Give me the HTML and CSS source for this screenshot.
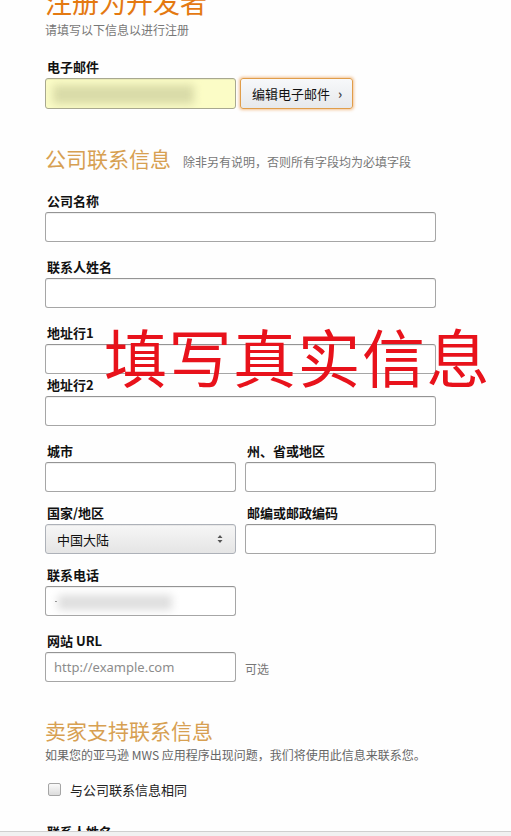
FILE: index.html
```html
<!DOCTYPE html>
<html lang="zh-CN">
<head>
<meta charset="utf-8">
<title>注册为开发者</title>
<link rel="stylesheet" href="styles.css">
</head>
<body>
<div class="page">
  <h1 class="title">注册为开发者</h1>
  <p class="subtitle">请填写以下信息以进行注册</p>

  <div class="field email-field">
    <label class="label">电子邮件</label>
    <div class="email-row">
      <div class="control email-box"><span class="blur blur-email"></span></div>
      <button class="btn-edit">编辑电子邮件 <span class="chev">›</span></button>
    </div>
  </div>

  <div class="section-head sh-company">
    <h2 class="section-title">公司联系信息</h2>
    <span class="section-note">除非另有说明，否则所有字段均为必填字段</span>
  </div>

  <div class="field f-first">
    <label class="label">公司名称</label>
    <div class="control"></div>
  </div>
  <div class="field f-gap">
    <label class="label">联系人姓名</label>
    <div class="control"></div>
  </div>
  <div class="field f-gap">
    <label class="label">地址行1</label>
    <div class="control"></div>
  </div>
  <div class="field f-tight">
    <label class="label">地址行2</label>
    <div class="control"></div>
  </div>

  <div class="row f-gap">
    <div class="col">
      <label class="label">城市</label>
      <div class="control"></div>
    </div>
    <div class="col">
      <label class="label">州、省或地区</label>
      <div class="control"></div>
    </div>
  </div>
  <div class="row f-near">
    <div class="col">
      <label class="label">国家/地区</label>
      <div class="control select">
        <span class="select-text">中国大陆</span>
        <svg class="updown" width="6" height="10" viewBox="0 0 6 10"><path d="M3 1 L5.5 4 L0.5 4 Z M3 9 L5.5 6 L0.5 6 Z" fill="#555"/></svg>
      </div>
    </div>
    <div class="col">
      <label class="label">邮编或邮政编码</label>
      <div class="control"></div>
    </div>
  </div>
  <div class="row f-near">
    <div class="col">
      <label class="label">联系电话</label>
      <div class="control phone"><span class="dash"></span><span class="blur blur-phone"></span></div>
    </div>
  </div>
  <div class="row f-gap">
    <div class="col">
      <label class="label">网站 URL</label>
      <div class="url-row">
        <div class="control url"><span class="placeholder">http://example.com</span></div>
        <span class="optional">可选</span>
      </div>
    </div>
  </div>

  <div class="section-head sh-seller">
    <h2 class="section-title">卖家支持联系信息</h2>
  </div>
  <p class="section-desc">如果您的亚马逊 MWS 应用程序出现问题，我们将使用此信息来联系您。</p>

  <div class="check-row">
    <span class="checkbox"></span>
    <span class="check-label">与公司联系信息相同</span>
  </div>

  <div class="field f-last">
    <label class="label">联系人姓名</label>
  </div>

  <div class="watermark">填写真实信息</div>
</div>
<div class="bottom-bar"></div>
</body>
</html>
```
FILE: styles.css
```css
html, body {
  margin: 0;
  padding: 0;
  background: #fefefe;
}
body {
  font-family: "Noto Sans CJK SC", "Noto Sans", sans-serif;
  color: #111;
  overflow: hidden;
}
.page {
  position: relative;
  display: flow-root;
  padding-left: 45px;
  width: 391px;
}
.title {
  margin: -14px 0 0 0;
  font-size: 27px;
  line-height: 32px;
  font-weight: 400;
  color: #e47911;
}
.subtitle {
  margin: 4px 0 0 0;
  font-size: 12px;
  line-height: 16px;
  color: #777;
}
.field { margin: 0; }
.email-field { margin-top: 20px; }
.label {
  display: block;
  font-size: 13px;
  line-height: 18px;
  font-weight: 700;
  color: #111;
  margin-bottom: 2px;
  padding-left: 2px;
}
.control {
  box-sizing: border-box;
  height: 30px;
  width: 391px;
  border: 1px solid #a6a6a6;
  border-top-color: #949494;
  border-radius: 3px;
  background: #fff;
  box-shadow: 0 1px 0 rgba(255,255,255,.5), inset 0 1px 0 rgba(0,0,0,.06);
  position: relative;
}
.email-row {
  display: flex;
  gap: 4px;
}
.email-box {
  width: 191px;
  height: 31px;
  background: #fbfcc6;
  border-color: #a8a890;
  overflow: hidden;
}
.blur {
  position: absolute;
  display: block;
  filter: blur(4px);
}
.blur-email {
  left: 7px;
  top: 6px;
  width: 141px;
  height: 19px;
  background: #d9dba8;
}
.btn-edit {
  box-sizing: border-box;
  width: 113px;
  height: 31px;
  margin: 0;
  padding: 0 0 0 11px;
  text-align: left;
  font-family: "Noto Sans CJK SC", "Noto Sans", sans-serif;
  font-size: 13px;
  color: #111;
  border: 1px solid #e09d4a;
  border-radius: 3px;
  background: linear-gradient(#f7f8fa, #e7e9ec);
  box-shadow: 0 0 3px 1px rgba(228,121,17,.45);
}
.chev {
  display: inline-block;
  margin-left: 5px;
  font-weight: 700;
  color: #444;
}
.section-head {
  display: flex;
  align-items: baseline;
  gap: 12px;
  height: 28px;
}
.sh-company { margin-top: 35px; }
.sh-seller { margin-top: 34px; }
.section-title {
  margin: 0;
  font-size: 21px;
  line-height: 28px;
  font-weight: 400;
  color: #d7a052;
}
.section-note {
  font-size: 12px;
  color: #777;
}
.f-first { margin-top: 20px; }
.f-gap { margin-top: 16px; }
.f-tight { margin-top: 2px; }
.f-near { margin-top: 12px; }
.f-last { margin-top: 24px; }
.row {
  display: flex;
  gap: 9px;
}
.col .control { width: 191px; }
.select {
  background: linear-gradient(#f6f6f6, #e5e5e5);
  border-color: #adb1b8;
  display: flex;
  align-items: center;
  justify-content: space-between;
  padding: 0 12px 0 11px;
}
.select-text {
  font-size: 13px;
  color: #111;
}
.phone { overflow: hidden; }
.phone .dash {
  position: absolute;
  left: 9px;
  top: 14px;
  width: 2px;
  height: 1px;
  background: #777;
}
.blur-phone {
  left: 12px;
  top: 8px;
  width: 114px;
  height: 15px;
  background: #dedede;
}
.url-row {
  display: flex;
  align-items: center;
  gap: 9px;
}
.url {
  display: flex;
  align-items: center;
  padding-left: 8px;
}
.placeholder {
  font-family: "Noto Sans", "Open Sans", sans-serif;
  font-size: 13px;
  color: #8c8c8c;
}
.optional {
  font-size: 12px;
  color: #777;
  padding-top: 2px;
}
.section-desc {
  margin: 3px 0 0 0;
  font-size: 12px;
  line-height: 16px;
  color: #666;
}
.check-row {
  display: flex;
  align-items: center;
  height: 20px;
  margin-top: 16px;
  padding-left: 3px;
  gap: 9px;
}
.checkbox {
  box-sizing: border-box;
  width: 13px;
  height: 13px;
  border: 1px solid #a5a5a5;
  border-radius: 2px;
  background: linear-gradient(#fafafa, #dcdcdc);
}
.check-label {
  font-size: 13px;
  color: #222;
}
.watermark {
  position: absolute;
  left: 104px;
  top: 323px;
  font-size: 63px;
  line-height: 1;
  letter-spacing: 1.5px;
  font-weight: 400;
  color: #e8121b;
  white-space: nowrap;
}
.bottom-bar {
  position: fixed;
  left: 0;
  right: 0;
  bottom: 0;
  height: 4px;
  border-top: 1px solid #cfcfcf;
  background: #f1f1f1;
}
```
